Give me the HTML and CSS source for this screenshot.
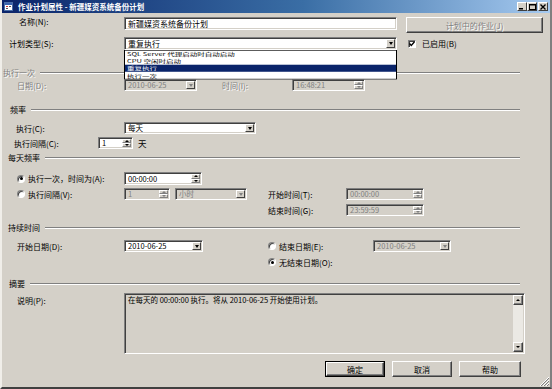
FILE: index.html
```html
<!DOCTYPE html>
<html lang="zh-CN">
<head>
    <meta charset="UTF-8">
    <meta name="viewport" content="width=device-width, initial-scale=1.0">
    <title>作业计划属性</title>
    <link rel="stylesheet" href="styles.css">
</head>
<body>
<div class="window">
    <div class="titlebar">
        <svg class="app-icon" width="9" height="9" viewBox="0 0 9 9">
            <rect x="0.5" y="0.5" width="8" height="8" fill="#fff" stroke="#4a6ea8"/>
            <rect x="1" y="1" width="7" height="2" fill="#3a64b0"/>
            <rect x="2" y="4" width="2" height="1" fill="#c33"/>
            <rect x="5" y="4" width="2" height="1" fill="#555"/>
            <rect x="2" y="6" width="2" height="1" fill="#555"/>
        </svg>
        <span class="title">作业计划属性 - 新疆媒资系统备份计划</span>
        <div class="caption-btns">
            <span class="cbtn"><svg width="6" height="6" viewBox="0 0 6 6"><rect x="0" y="4" width="4" height="1.5"/></svg></span>
            <span class="cbtn"><svg width="7" height="6" viewBox="0 0 7 6"><rect x="0.5" y="0.5" width="6" height="5" fill="none" stroke="#000"/><rect x="0" y="0" width="7" height="1.5"/></svg></span>
            <span class="cbtn close"><svg width="6" height="6" viewBox="0 0 6 6"><path d="M0.5 0.5l5 5M5.5 0.5l-5 5" stroke="#000" stroke-width="1.4"/></svg></span>
        </div>
    </div>

    <div class="body">
        <!-- name -->
        <div class="row r-name">
            <span class="lab pl-17">名称(N):</span>
            <div class="field w-273">新疆媒资系统备份计划</div>
            <span class="btn jobs-btn off-text">计划中的作业(J)</span>
        </div>

        <!-- schedule type -->
        <div class="row r-type">
            <span class="lab pl-7">计划类型(S):</span>
            <div class="combo-wrap">
                <div class="field w-273">
                    <span class="val">重复执行</span>
                    <span class="drop"></span>
                </div>
                <ul class="droplist">
                    <li>SQL Server 代理启动时自动启动</li>
                    <li>CPU 空闲时启动</li>
                    <li class="sel">重复执行</li>
                    <li>执行一次</li>
                </ul>
            </div>
            <span class="check checked"><svg width="6" height="6" viewBox="0 0 6 6"><path d="M0.5 2.5l1.8 2L5.5 0.8" fill="none" stroke="#000" stroke-width="1.3"/></svg></span>
            <span class="check-text">已启用(B)</span>
        </div>

        <!-- one time -->
        <div class="group g-once pl-1"><span class="off-text">执行一次</span></div>
        <div class="row r-date">
            <span class="lab pl-15 off-text">日期(D):</span>
            <div class="field off w-73">
                <span class="val">2010-06-25</span>
                <span class="drop"></span>
            </div>
            <span class="lab-time off-text">时间(I):</span>
            <div class="field off w-73">
                <span class="val">16:48:21</span>
                <span class="spin"><i class="up"></i><i class="dn"></i></span>
            </div>
        </div>

        <!-- frequency -->
        <div class="group g-freq pl-8"><span>频率</span></div>
        <div class="row r-exec">
            <span class="lab pl-14">执行(C):</span>
            <div class="field w-132">
                <span class="val">每天</span>
                <span class="drop"></span>
            </div>
        </div>
        <div class="row r-interval">
            <span class="lab lab-short pl-12">执行间隔(C):</span>
            <div class="field w-35">
                <span class="val">1</span>
                <span class="spin"><i class="up"></i><i class="dn"></i></span>
            </div>
            <span class="unit">天</span>
        </div>

        <!-- daily frequency -->
        <div class="group g-daily pl-6"><span>每天频率</span></div>
        <div class="row r-once">
            <span class="lab pl-15"><span class="radio checked"></span>执行一次，时间为(A):</span>
            <div class="field w-78">
                <span class="val">00:00:00</span>
                <span class="spin"><i class="up"></i><i class="dn"></i></span>
            </div>
        </div>
        <div class="row r-every">
            <span class="lab pl-15"><span class="radio"></span>执行间隔(V):</span>
            <div class="field off w-46">
                <span class="val">1</span>
                <span class="spin"><i class="up"></i><i class="dn"></i></span>
            </div>
            <div class="field off w-72 ml-5">
                <span class="val">小时</span>
                <span class="drop"></span>
            </div>
            <span class="lab-right ml-21">开始时间(T):</span>
            <div class="field off w-78">
                <span class="val">00:00:00</span>
                <span class="spin"><i class="up"></i><i class="dn"></i></span>
            </div>
        </div>
        <div class="row r-end pl-266">
            <span class="lab-right">结束时间(G):</span>
            <div class="field off w-78">
                <span class="val">23:59:59</span>
                <span class="spin"><i class="up"></i><i class="dn"></i></span>
            </div>
        </div>

        <!-- duration -->
        <div class="group g-dur pl-6"><span>持续时间</span></div>
        <div class="row r-start">
            <span class="lab pl-15">开始日期(D):</span>
            <div class="field w-79">
                <span class="val">2010-06-25</span>
                <span class="drop"></span>
            </div>
            <span class="lab-radio ml-65"><span class="radio"></span>结束日期(E):</span>
            <div class="field off w-78">
                <span class="val">2010-06-25</span>
                <span class="drop"></span>
            </div>
        </div>
        <div class="row r-noend pl-266">
            <span class="lab-radio"><span class="radio checked"></span>无结束日期(O):</span>
        </div>

        <!-- summary -->
        <div class="group g-sum pl-7"><span>摘要</span></div>
        <div class="row r-desc">
            <span class="lab pl-15 desc-lab">说明(P):</span>
            <div class="field memo">
                <span class="memo-text">在每天的 00:00:00 执行。将从 2010-06-25 开始使用计划。</span>
                <span class="vscroll">
                    <span class="sbtn"><i class="up"></i></span>
                    <span class="track"></span>
                    <span class="sbtn"><i class="dn"></i></span>
                </span>
            </div>
        </div>

        <div class="row r-buttons">
            <span class="btn default"><span>确定</span></span>
            <span class="btn">取消</span>
            <span class="btn help">帮助</span>
        </div>
    </div>

    <svg class="grip" width="11" height="11" viewBox="0 0 11 11">
        <path d="M10 1L1 10M10 4L4 10M10 7L7 10" stroke="#fff" stroke-width="1"/>
        <path d="M10 2L2 10M10 5L5 10M10 8L8 10" stroke="#808080" stroke-width="1"/>
    </svg>
</div>
</body>
</html>
```

FILE: styles.css
```css
/* General */
* {
    box-sizing: border-box;
    margin: 0;
    padding: 0;
}

body {
    background-color: #d4d0c8;
    color: #000;
    font-family: "Noto Sans CJK SC", "Noto Sans", sans-serif;
    font-size: 8px;
    overflow: hidden;
}

.window {
    position: relative;
    width: 552px;
    height: 389px;
    background-color: #d4d0c8;
    border-left: 2px solid #f0eee9;
    border-right: 2px solid #808080;
    border-bottom: 2px solid #404040;
    display: flex;
    flex-direction: column;
}

/* Title bar */
.titlebar {
    height: 13px;
    display: flex;
    align-items: center;
    padding-left: 2px;
    background: linear-gradient(to right, #0a246a, #3a6ea5 55%, #a6caf0);
    color: #fff;
}

.app-icon {
    margin-right: 5px;
}

.title {
    font-weight: bold;
    font-size: 7.5px;
    line-height: 12px;
    white-space: nowrap;
}

.caption-btns {
    margin-left: auto;
    margin-right: 2px;
    display: flex;
}

.cbtn {
    width: 10px;
    height: 9px;
    display: flex;
    align-items: center;
    justify-content: center;
    background-color: #d4d0c8;
    border: 1px solid;
    border-color: #fff #404040 #404040 #fff;
}

.cbtn.close {
    margin-left: 1px;
}

/* Body and rows */
.body {
    display: flex;
    flex-direction: column;
}

.row {
    display: flex;
    align-items: center;
    white-space: nowrap;
}

.lab {
    flex: 0 0 122px;
    display: flex;
    align-items: center;
}

.lab-short {
    flex-basis: 96px;
}

.lab-time {
    margin-left: 25px;
    width: 70px;
}

.lab-right {
    width: 78px;
}

.lab-radio {
    width: 105px;
    display: flex;
    align-items: center;
}

.unit {
    margin-left: 5px;
    font-size: 8.5px;
}

.off-text {
    color: #808080;
    text-shadow: 1px 1px 0 #fff;
}

.pl-1 { padding-left: 1px; }
.pl-6 { padding-left: 6px; }
.pl-7 { padding-left: 7px; }
.pl-8 { padding-left: 8px; }
.pl-12 { padding-left: 12px; }
.pl-14 { padding-left: 14px; }
.pl-15 { padding-left: 15px; }
.pl-17 { padding-left: 17px; }
.pl-266 { padding-left: 266px; }
.ml-5 { margin-left: 5px; }
.ml-21 { margin-left: 21px; }
.ml-65 { margin-left: 65px; }

/* vertical rhythm */
.r-name { margin-top: 3px; align-items: flex-start; }
.r-type { margin-top: 4px; }
.g-once { margin-top: 18px; }
.r-date { margin-top: 2px; }
.g-freq { margin-top: 14px; }
.r-exec { margin-top: 8px; }
.r-interval { margin-top: 3px; }
.g-daily { margin-top: 4px; }
.r-once { margin-top: 10px; }
.r-every { margin-top: 3px; }
.r-end { margin-top: 4px; }
.g-dur { margin-top: 7px; }
.r-start { margin-top: 8px; }
.r-noend { margin-top: 4px; height: 12px; }
.g-sum { margin-top: 11px; }
.r-desc { margin-top: 5px; align-items: flex-start; }
.r-buttons { margin-top: 7px; justify-content: flex-end; padding-right: 29px; gap: 7px; }

/* Group headers */
.group {
    display: flex;
    align-items: center;
    height: 9px;
    margin-right: 30px;
    white-space: nowrap;
}

.group span {
    padding-right: 5px;
}

.group::after {
    content: "";
    flex: 1;
    border-top: 1px solid #808080;
    border-bottom: 1px solid #fff;
}

/* Sunken fields */
.field {
    height: 12px;
    display: flex;
    align-items: center;
    padding: 1px 1px 1px 3px;
    background-color: #fff;
    border: 1px solid;
    border-color: #808080 #fff #fff #808080;
    box-shadow: inset 1px 1px 0 #404040, inset -1px -1px 0 #d4d0c8;
    font-size: 7.5px;
    line-height: 8px;
    white-space: nowrap;
    overflow: hidden;
}

.r-name .field {
    height: 13px;
    margin-top: 1px;
    font-size: 8px;
}

.r-type .field {
    height: 13px;
    font-size: 8px;
}

.r-once .field {
    height: 13px;
}

.field.off {
    background-color: #d4d0c8;
    color: #808080;
}

.field .val {
    flex: 1;
}

.w-35 { width: 35px; }
.w-46 { width: 46px; }
.w-72 { width: 72px; }
.w-73 { width: 73px; }
.w-78 { width: 78px; }
.w-79 { width: 79px; }
.w-132 { width: 132px; }
.w-273 { width: 273px; }

/* Combo arrow */
.drop,
.sbtn {
    flex: 0 0 9px;
    height: 100%;
    background-color: #d4d0c8;
    border: 1px solid;
    border-color: #fff #404040 #404040 #fff;
    display: flex;
    align-items: center;
    justify-content: center;
}

.drop::after {
    content: "";
    border-left: 2.5px solid transparent;
    border-right: 2.5px solid transparent;
    border-top: 3px solid #000;
}

.field.off .drop::after {
    border-top-color: #808080;
}

/* Spin buttons */
.spin {
    flex: 0 0 9px;
    height: 100%;
    display: flex;
    flex-direction: column;
}

.spin i {
    flex: 1;
    background-color: #d4d0c8;
    border: 1px solid;
    border-color: #fff #808080 #808080 #fff;
    display: flex;
    align-items: center;
    justify-content: center;
}

.up::after {
    content: "";
    border-left: 2px solid transparent;
    border-right: 2px solid transparent;
    border-bottom: 2px solid #000;
}

.dn::after {
    content: "";
    border-left: 2px solid transparent;
    border-right: 2px solid transparent;
    border-top: 2px solid #000;
}

.field.off .up::after { border-bottom-color: #808080; }
.field.off .dn::after { border-top-color: #808080; }

/* Dropdown list (squashed like the captured popup) */
.combo-wrap {
    position: relative;
}

.droplist {
    position: absolute;
    left: 0;
    top: 13px;
    width: 273px;
    height: 46px;
    list-style: none;
    background-color: #fff;
    border: 1px solid #000;
    font-size: 7.5px;
    transform: scaleY(0.64);
    transform-origin: top left;
    z-index: 5;
}

.droplist li {
    height: 11px;
    line-height: 11px;
    padding-left: 2px;
}

.droplist li.sel {
    background-color: #0a246a;
    color: #fff;
}

/* Checkbox */
.check {
    margin-left: 11px;
    width: 8px;
    height: 8px;
    background-color: #fff;
    border: 1px solid;
    border-color: #808080 #fff #fff #808080;
    box-shadow: inset 1px 1px 0 #404040;
    display: flex;
    align-items: center;
    justify-content: center;
}

.check-text {
    margin-left: 6px;
}

/* Radio */
.radio {
    width: 8px;
    height: 8px;
    margin-right: 3px;
    border-radius: 50%;
    background-color: #fff;
    border: 1px solid;
    border-color: #808080 #fff #fff #808080;
    box-shadow: inset 1px 1px 0 #404040;
    display: flex;
    align-items: center;
    justify-content: center;
}

.radio.checked::after {
    content: "";
    width: 3px;
    height: 3px;
    border-radius: 50%;
    background-color: #000;
}

/* Buttons */
.btn {
    height: 16px;
    width: 60px;
    display: flex;
    align-items: center;
    justify-content: center;
    background-color: #d4d0c8;
    border: 1px solid;
    border-color: #fff #404040 #404040 #fff;
    box-shadow: inset -1px -1px 0 #808080;
}

.jobs-btn {
    width: 137px;
    margin-left: 9px;
    margin-top: 1px;
}

.btn.help {
    width: 62px;
}

.btn.default {
    border: 1px solid #000;
    box-shadow: none;
}

.btn.default span {
    width: 100%;
    height: 100%;
    display: flex;
    align-items: center;
    justify-content: center;
    border: 1px solid;
    border-color: #fff #404040 #404040 #fff;
    box-shadow: inset -1px -1px 0 #808080;
}

/* Description memo */
.desc-lab {
    margin-top: 2px;
}

.memo {
    width: 401px;
    height: 61px;
    align-items: stretch;
    background-color: #d4d0c8;
}

.memo-text {
    flex: 1;
    line-height: 8px;
    padding-top: 1px;
}

.vscroll {
    flex: 0 0 10px;
    display: flex;
    flex-direction: column;
}

.sbtn {
    flex: 0 0 10px;
    height: 10px;
    box-shadow: inset -1px -1px 0 #808080;
}

.sbtn i {
    display: flex;
}

.track {
    flex: 1;
    background-color: #ebe9e4;
}

/* Resize grip */
.grip {
    position: absolute;
    right: 0;
    bottom: 0;
}
```
